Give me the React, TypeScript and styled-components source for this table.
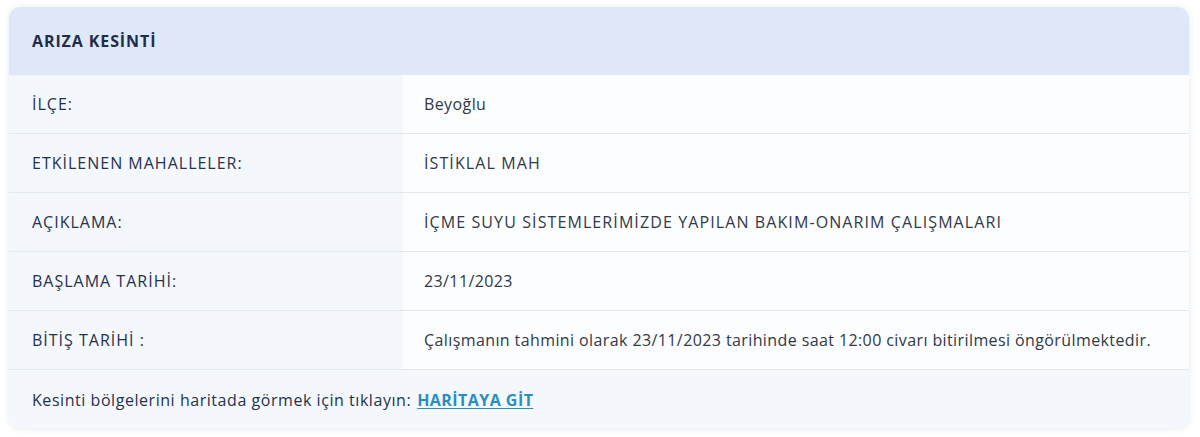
import React from "react";
import styled, { createGlobalStyle } from "styled-components";

const Global = createGlobalStyle`
  html, body { margin: 0; padding: 0; background: #ffffff; }
  body { font-family: "Open Sans", "Noto Sans", sans-serif; }
`;

const Page = styled.div`
  padding: 7px 11px 9px 9px;
`;

const Card = styled.div`
  border-radius: 12px;
  overflow: hidden;
  background: #f4f7fb;
  box-shadow: 0 0 6px rgba(180, 195, 215, 0.35);
`;

const Header = styled.div`
  height: 68px;
  display: flex;
  align-items: center;
  padding-left: 23px;
  background: #dfe8f6;
  color: #1f2d4b;
  font-weight: 700;
  font-size: 16px;
  letter-spacing: 0.9px;
`;

const Row = styled.div`
  display: grid;
  grid-template-columns: 394px 1fr;
  height: 58px;
  border-bottom: 1px solid #e3e8ef;
`;

const Label = styled.div`
  display: flex;
  align-items: center;
  padding-left: 23px;
  background: #f4f7fb;
  color: #26324d;
  font-size: 16px;
  letter-spacing: 1px;
`;

const Value = styled.div<{ $caps?: boolean }>`
  display: flex;
  align-items: center;
  padding-left: 21px;
  background: #fcfdfe;
  color: #313848;
  font-size: 16px;
  letter-spacing: ${(p) => (p.$caps ? "1.1px" : "0.4px")};
`;

const Footer = styled.div`
  height: 59px;
  display: flex;
  align-items: center;
  padding-left: 23px;
  background: #f4f7fb;
  color: #26324d;
  font-size: 16px;
  letter-spacing: 0.55px;
`;

const MapLink = styled.a`
  margin-left: 6px;
  color: #2a8ec0;
  font-weight: 700;
  letter-spacing: 0.45px;
  text-decoration: underline;
  text-underline-offset: 2px;
  cursor: pointer;
`;

const rows: [string, string, boolean][] = [
  ["İLÇE:", "Beyoğlu", false],
  ["ETKİLENEN MAHALLELER:", "İSTİKLAL MAH", true],
  ["AÇIKLAMA:", "İÇME SUYU SİSTEMLERİMİZDE YAPILAN BAKIM-ONARIM ÇALIŞMALARI", true],
  ["BAŞLAMA TARİHİ:", "23/11/2023", false],
  [
    "BİTİŞ TARİHİ :",
    "Çalışmanın tahmini olarak 23/11/2023 tarihinde saat 12:00 civarı bitirilmesi öngörülmektedir.",
    false,
  ],
];

export default function App() {
  return (
    <>
      <Global />
      <Page>
        <Card>
          <Header>ARIZA KESİNTİ</Header>
          {rows.map(([l, v, caps]) => (
            <Row key={l}>
              <Label>{l}</Label>
              <Value $caps={caps}>{v}</Value>
            </Row>
          ))}
          <Footer>
            Kesinti bölgelerini haritada görmek için tıklayın:
            <MapLink>HARİTAYA GİT</MapLink>
          </Footer>
        </Card>
      </Page>
    </>
  );
}
